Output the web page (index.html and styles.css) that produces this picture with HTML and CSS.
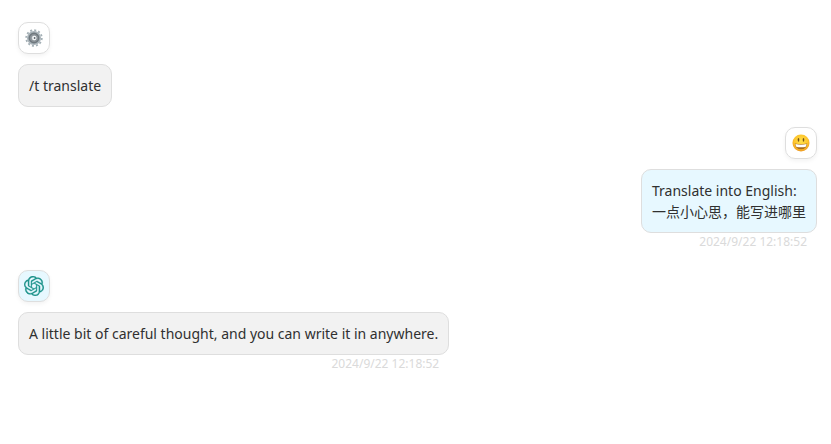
FILE: index.html
```html
<!DOCTYPE html>
<html lang="en">
<head>
<meta charset="utf-8">
<title>Chat</title>
<link rel="stylesheet" href="styles.css">
</head>
<body>
<main class="chat">
  <section class="message">
    <div class="avatar">
      <svg width="18" height="18" viewBox="0 0 18 18">
        <circle cx="9" cy="9" r="7.8" fill="none" stroke="#a3afb5" stroke-width="1.8" stroke-dasharray="2 2.084"/>
        <circle cx="9" cy="9" r="5.9" fill="#a3a9ad" stroke="#a9b3b9" stroke-width="2.2"/>
        <circle cx="9" cy="9" r="4.6" fill="none" stroke="#6f787e" stroke-width="1.7"/>
        <circle cx="9" cy="9" r="3.3" fill="#a6adb2" stroke="#7b848a" stroke-width=".8"/>
        <circle cx="9.3" cy="9" r="2.2" fill="#f4f6f7"/>
        <circle cx="9.6" cy="9" r=".9" fill="#596269"/>
      </svg>
    </div>
    <div class="bubble">/t translate</div>
  </section>
  <section class="message user">
    <div class="avatar">
      <svg width="18" height="18" viewBox="0 0 18 18">
        <defs>
          <radialGradient id="face" cx=".5" cy=".4" r=".6">
            <stop offset="0" stop-color="#ffe04a"/>
            <stop offset=".65" stop-color="#fdc62d"/>
            <stop offset="1" stop-color="#ed9720"/>
          </radialGradient>
        </defs>
        <circle cx="9" cy="9" r="8.5" fill="url(#face)"/>
        <ellipse cx="6.5" cy="5.8" rx=".8" ry="1.9" fill="#72501c"/>
        <ellipse cx="11.5" cy="5.8" rx=".8" ry="1.9" fill="#72501c"/>
        <path d="M2.8 9.4Q9 11 15.2 9.4Q14.6 15.2 9 15.2Q3.4 15.2 2.8 9.4Z" fill="#a86c1c"/>
        <path d="M3.4 10Q9 11.3 14.6 10Q14.4 12 13.4 12.9Q9 13.7 4.6 12.9Q3.6 12 3.4 10Z" fill="#fff"/>
      </svg>
    </div>
    <div class="bubble">Translate into English:<br>一点小心思，能写进哪里</div>
    <time class="date">2024/9/22 12:18:52</time>
  </section>
  <section class="message">
    <div class="avatar bot">
      <svg width="20" height="20" viewBox="0 0 24 24" fill="#1f948c" stroke="#1f948c" stroke-width=".25">
        <path d="M22.2819 9.8211a5.9847 5.9847 0 0 0-.5157-4.9108 6.0462 6.0462 0 0 0-6.5098-2.9A6.0651 6.0651 0 0 0 4.9807 4.1818a5.9847 5.9847 0 0 0-3.9977 2.9 6.0462 6.0462 0 0 0 .7427 7.0966 5.98 5.98 0 0 0 .511 4.9107 6.051 6.051 0 0 0 6.5146 2.9001A5.9847 5.9847 0 0 0 13.2599 24a6.0557 6.0557 0 0 0 5.7718-4.2058 5.9894 5.9894 0 0 0 3.9977-2.9001 6.0557 6.0557 0 0 0-.7475-7.0729zm-9.022 12.6081a4.4755 4.4755 0 0 1-2.8764-1.0408l.1419-.0804 4.7783-2.7582a.7948.7948 0 0 0 .3927-.6813v-6.7369l2.02 1.1686a.071.071 0 0 1 .038.052v5.5826a4.504 4.504 0 0 1-4.4945 4.4944zm-9.6607-4.1254a4.4708 4.4708 0 0 1-.5346-3.0137l.142.0852 4.783 2.7582a.7712.7712 0 0 0 .7806 0l5.8428-3.3685v2.3324a.0804.0804 0 0 1-.0332.0615L9.74 19.9502a4.4992 4.4992 0 0 1-6.1408-1.6464zM2.3408 7.8956a4.485 4.485 0 0 1 2.3655-1.9728V11.6a.7664.7664 0 0 0 .3879.6765l5.8144 3.3543-2.0201 1.1685a.0757.0757 0 0 1-.071 0l-4.8303-2.7865A4.504 4.504 0 0 1 2.3408 7.872zm16.5963 3.8558L13.1038 8.364 15.1192 7.2a.0757.0757 0 0 1 .071 0l4.8303 2.7913a4.4944 4.4944 0 0 1-.6765 8.1042v-5.6772a.79.79 0 0 0-.407-.667zm2.0107-3.0231l-.142-.0852-4.7735-2.7818a.7759.7759 0 0 0-.7854 0L9.409 9.2297V6.8974a.0662.0662 0 0 1 .0284-.0615l4.8303-2.7866a4.4992 4.4992 0 0 1 6.6802 4.66zM8.3065 12.863l-2.02-1.1638a.0804.0804 0 0 1-.038-.0567V6.0742a4.4992 4.4992 0 0 1 7.3757-3.4537l-.142.0805L8.704 5.459a.7948.7948 0 0 0-.3927.6813zm1.0976-2.3654l2.602-1.4998 2.6069 1.4998v2.9994l-2.5974 1.4997-2.6067-1.4997Z"/>
      </svg>
    </div>
    <div class="bubble">A little bit of careful thought, and you can write it in anywhere.</div>
    <time class="date">2024/9/22 12:18:52</time>
  </section>
</main>
</body>
</html>
```

FILE: styles.css
```css
body {
  margin: 0;
  background: #fff;
  color: #303030;
  font-family: "Noto Sans", "Noto Sans CJK SC", sans-serif;
}

.chat {
  display: flex;
  flex-direction: column;
  align-items: flex-start;
  gap: 20px;
  padding: 22px 14px 0 18px;
}

.message {
  display: flex;
  flex-direction: column;
  align-items: flex-start;
}

.user {
  align-self: flex-end;
  align-items: flex-end;
}

.avatar {
  display: flex;
  align-items: center;
  justify-content: center;
  width: 30px;
  height: 30px;
  border: 1px solid #dedede;
  border-radius: 10px;
  box-shadow: 0 2px 4px rgba(0, 0, 0, 0.05);
}

.bot {
  background: #e7f8ff;
}

.bubble {
  margin-top: 10px;
  padding: 10px;
  border: 1px solid #dedede;
  border-radius: 10px;
  background: #f2f2f2;
  font-size: 14px;
  line-height: 21px;
}

.user .bubble {
  background: #e7f8ff;
}

.date {
  align-self: flex-end;
  height: 17px;
  margin-right: 10px;
  color: #dadada;
  font-size: 12px;
  line-height: 17px;
}
```
